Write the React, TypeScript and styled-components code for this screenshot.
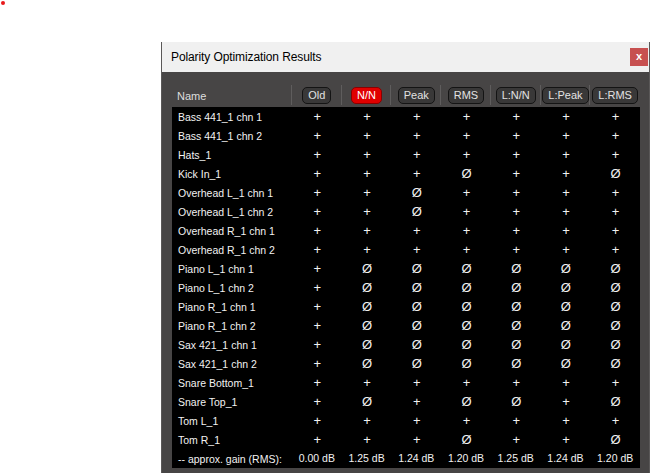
import React from 'react';
import styled, { createGlobalStyle } from 'styled-components';

const GlobalStyle = createGlobalStyle`
    html, body {
        margin: 0;
        padding: 0;
        background: #ffffff;
        overflow: hidden;
    }
    body {
        font-family: "Liberation Sans", Arial, sans-serif;
    }
`;

type Sign = '+' | 'Ø';

interface ITrack {
    name: string;
    signs: string;
}

const columns = ['Old', 'N/N', 'Peak', 'RMS', 'L:N/N', 'L:Peak', 'L:RMS'];
const activeColumn = 'N/N';

// one char per column: + keeps polarity, o flips it
const tracks: ITrack[] = [
    { name: 'Bass 441_1 chn 1', signs: '+++++++' },
    { name: 'Bass 441_1 chn 2', signs: '+++++++' },
    { name: 'Hats_1', signs: '+++++++' },
    { name: 'Kick In_1', signs: '+++o++o' },
    { name: 'Overhead L_1 chn 1', signs: '++o++++' },
    { name: 'Overhead L_1 chn 2', signs: '++o++++' },
    { name: 'Overhead R_1 chn 1', signs: '+++++++' },
    { name: 'Overhead R_1 chn 2', signs: '+++++++' },
    { name: 'Piano L_1 chn 1', signs: '+oooooo' },
    { name: 'Piano L_1 chn 2', signs: '+oooooo' },
    { name: 'Piano R_1 chn 1', signs: '+oooooo' },
    { name: 'Piano R_1 chn 2', signs: '+oooooo' },
    { name: 'Sax 421_1 chn 1', signs: '+oooooo' },
    { name: 'Sax 421_1 chn 2', signs: '+oooooo' },
    { name: 'Snare Bottom_1', signs: '+++++++' },
    { name: 'Snare Top_1', signs: '+o+oo+o' },
    { name: 'Tom L_1', signs: '+++++++' },
    { name: 'Tom R_1', signs: '+++o++o' },
];

const gains = ['0.00 dB', '1.25 dB', '1.24 dB', '1.20 dB', '1.25 dB', '1.24 dB', '1.20 dB'];

function toSign(c: string): Sign {
    return c === 'o' ? 'Ø' : '+';
}

const App: React.FC = () => {
    return (
        <>
            <GlobalStyle />
            <Desktop>
                <FocusDot />
                <Window>
                    <TitleBar>
                        <Title>Polarity Optimization Results</Title>
                        <CloseBtn>x</CloseBtn>
                    </TitleBar>
                    <Body>
                        <HeaderRow>
                            <NameHead>Name</NameHead>
                            {columns.map((c) => (
                                <HeadCell key={c}>
                                    <ColBtn $active={c === activeColumn}>{c}</ColBtn>
                                </HeadCell>
                            ))}
                        </HeaderRow>
                        <Table>
                            {tracks.map((t) => (
                                <Row key={t.name}>
                                    <NameCell>{t.name}</NameCell>
                                    {t.signs.split('').map((s, i) => (
                                        <Cell key={i} $sign>{toSign(s)}</Cell>
                                    ))}
                                </Row>
                            ))}
                            <Row>
                                <NameCell>-- approx. gain (RMS):</NameCell>
                                {gains.map((g, i) => (
                                    <Cell key={i}>{g}</Cell>
                                ))}
                            </Row>
                        </Table>
                    </Body>
                </Window>
            </Desktop>
        </>
    );
};

export default App;

const Desktop = styled.div`
    position: relative;
    width: 651px;
    height: 473px;
    padding: 42px 0 0 161px;
    box-sizing: border-box;
`;

const FocusDot = styled.div`
    position: absolute;
    left: 1px;
    top: 1px;
    width: 4px;
    height: 4px;
    border-radius: 50%;
    background: #e8191b;
`;

const Window = styled.div`
    width: 489px;
    height: 440px;
    border-left: 1px solid #5a5858;
    border-right: 1px solid #5a5858;
    box-sizing: border-box;
    display: flex;
    flex-direction: column;
`;

const TitleBar = styled.div`
    height: 30px;
    background: #f0f0f0;
    display: flex;
    align-items: center;
    justify-content: space-between;
    padding: 0 1px 0 9px;
`;

const Title = styled.span`
    font-size: 12px;
    color: #000;
    letter-spacing: -0.1px;
`;

const CloseBtn = styled.div`
    width: 18px;
    height: 18px;
    background: #c75050;
    color: #fff;
    font-size: 11px;
    font-weight: bold;
    display: flex;
    align-items: center;
    justify-content: center;
    line-height: 1;
    padding-bottom: 2px;
    box-sizing: border-box;
`;

const Body = styled.div`
    flex: 1;
    background: #474545;
    padding: 12px 9px 0 10px;
`;

const HeaderRow = styled.div`
    display: grid;
    grid-template-columns: 120px repeat(7, 1fr);
    height: 22px;
    align-items: center;
    margin-bottom: 1px;
`;

const NameHead = styled.div`
    font-size: 11px;
    color: #dedede;
    padding-left: 5px;
    padding-top: 1px;
`;

const HeadCell = styled.div`
    height: 20px;
    display: flex;
    align-items: center;
    justify-content: center;
    border-left: 1px solid #5f5d5d;
    margin-left: -1px;
`;

const ColBtn = styled.div<{ $active?: boolean }>`
    height: 17px;
    padding: 0 5px;
    box-sizing: border-box;
    border-radius: 5px;
    border: 1px solid ${(p) => (p.$active ? '#8a0000' : '#141414')};
    background: ${(p) => (p.$active ? '#e00000' : '#393838')};
    color: ${(p) => (p.$active ? '#ffffff' : '#e2e2e2')};
    font-size: 11px;
    display: flex;
    align-items: center;
`;

const Table = styled.div`
    background: #000;
    display: flex;
    flex-direction: column;
`;

const Row = styled.div`
    display: grid;
    grid-template-columns: 120px repeat(7, 1fr);
    height: 19px;
    align-items: center;
    font-size: 10.5px;
    color: #f2f2f2;
`;

const NameCell = styled.div`
    padding-left: 6px;
    white-space: nowrap;
`;

const Cell = styled.div<{ $sign?: boolean }>`
    text-align: center;
    white-space: nowrap;
    font-size: ${(p) => (p.$sign ? '13px' : '10.5px')};
    line-height: 1;
    padding-left: ${(p) => (p.$sign ? '1px' : '0')};
`;
